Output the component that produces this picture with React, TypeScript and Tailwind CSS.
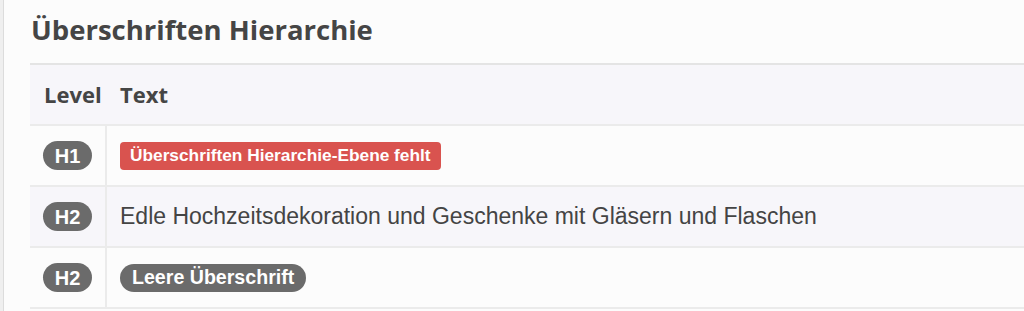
import React from "react";

const rows = [
  { level: "H1", kind: "error", text: "Überschriften Hierarchie-Ebene fehlt" },
  { level: "H2", kind: "text", text: "Edle Hochzeitsdekoration und Geschenke mit Gläsern und Flaschen" },
  { level: "H2", kind: "empty", text: "Leere Überschrift" },
];

export default function App() {
  return (
    <div className="flex h-[311px] w-full overflow-hidden bg-[#fcfcfc]">
      <div className="w-[4px] shrink-0 border-r border-[#dcdcdc] bg-[#efefef]" />
      <div className="flex-1 pl-[26px]">
        <div className="flex h-[63px] items-center pb-[4px] pl-[1px]">
          <h2 className="text-[27.5px] font-bold leading-none text-[#454545] [font-family:'Open_Sans',sans-serif]">
            Überschriften Hierarchie
          </h2>
        </div>
        <div className="border-t-2 border-[#e4e4e4]">
          <div className="grid h-[61px] grid-cols-[77px_1fr] items-center border-b-2 border-[#ebebeb] bg-[#f7f6fa] text-[22px] font-bold text-[#454545] [font-family:'Open_Sans',sans-serif]">
            <div className="pl-[14px]">Level</div>
            <div className="pl-[13px]">Text</div>
          </div>
          {rows.map((r, i) => (
            <div
              key={i}
              className={`grid h-[61px] grid-cols-[77px_1fr] border-b-2 border-[#ebebeb] ${
                i % 2 === 1 ? "bg-[#f7f6fa]" : "bg-[#fcfcfc]"
              } [font-family:'Liberation_Sans',Arial,sans-serif]`}
            >
              <div className="flex items-center border-r-2 border-[#ebebeb] pl-[13px]">
                <span className="flex h-[29px] w-[49px] items-center justify-center rounded-full bg-[#6b6b6b] text-[20px] font-bold text-white">
                  {r.level}
                </span>
              </div>
              <div className="flex items-center pl-[13px]">
                {r.kind === "error" && (
                  <span className="flex h-[28px] items-center rounded-[4px] bg-[#d9534f] px-[10px] text-[17.3px] font-bold text-white">
                    {r.text}
                  </span>
                )}
                {r.kind === "text" && (
                  <span className="text-[23px] text-[#444444]">{r.text}</span>
                )}
                {r.kind === "empty" && (
                  <span className="flex h-[28px] items-center rounded-full bg-[#6b6b6b] px-[12px] text-[19.6px] font-bold text-white">
                    {r.text}
                  </span>
                )}
              </div>
            </div>
          ))}
        </div>
      </div>
    </div>
  );
}
